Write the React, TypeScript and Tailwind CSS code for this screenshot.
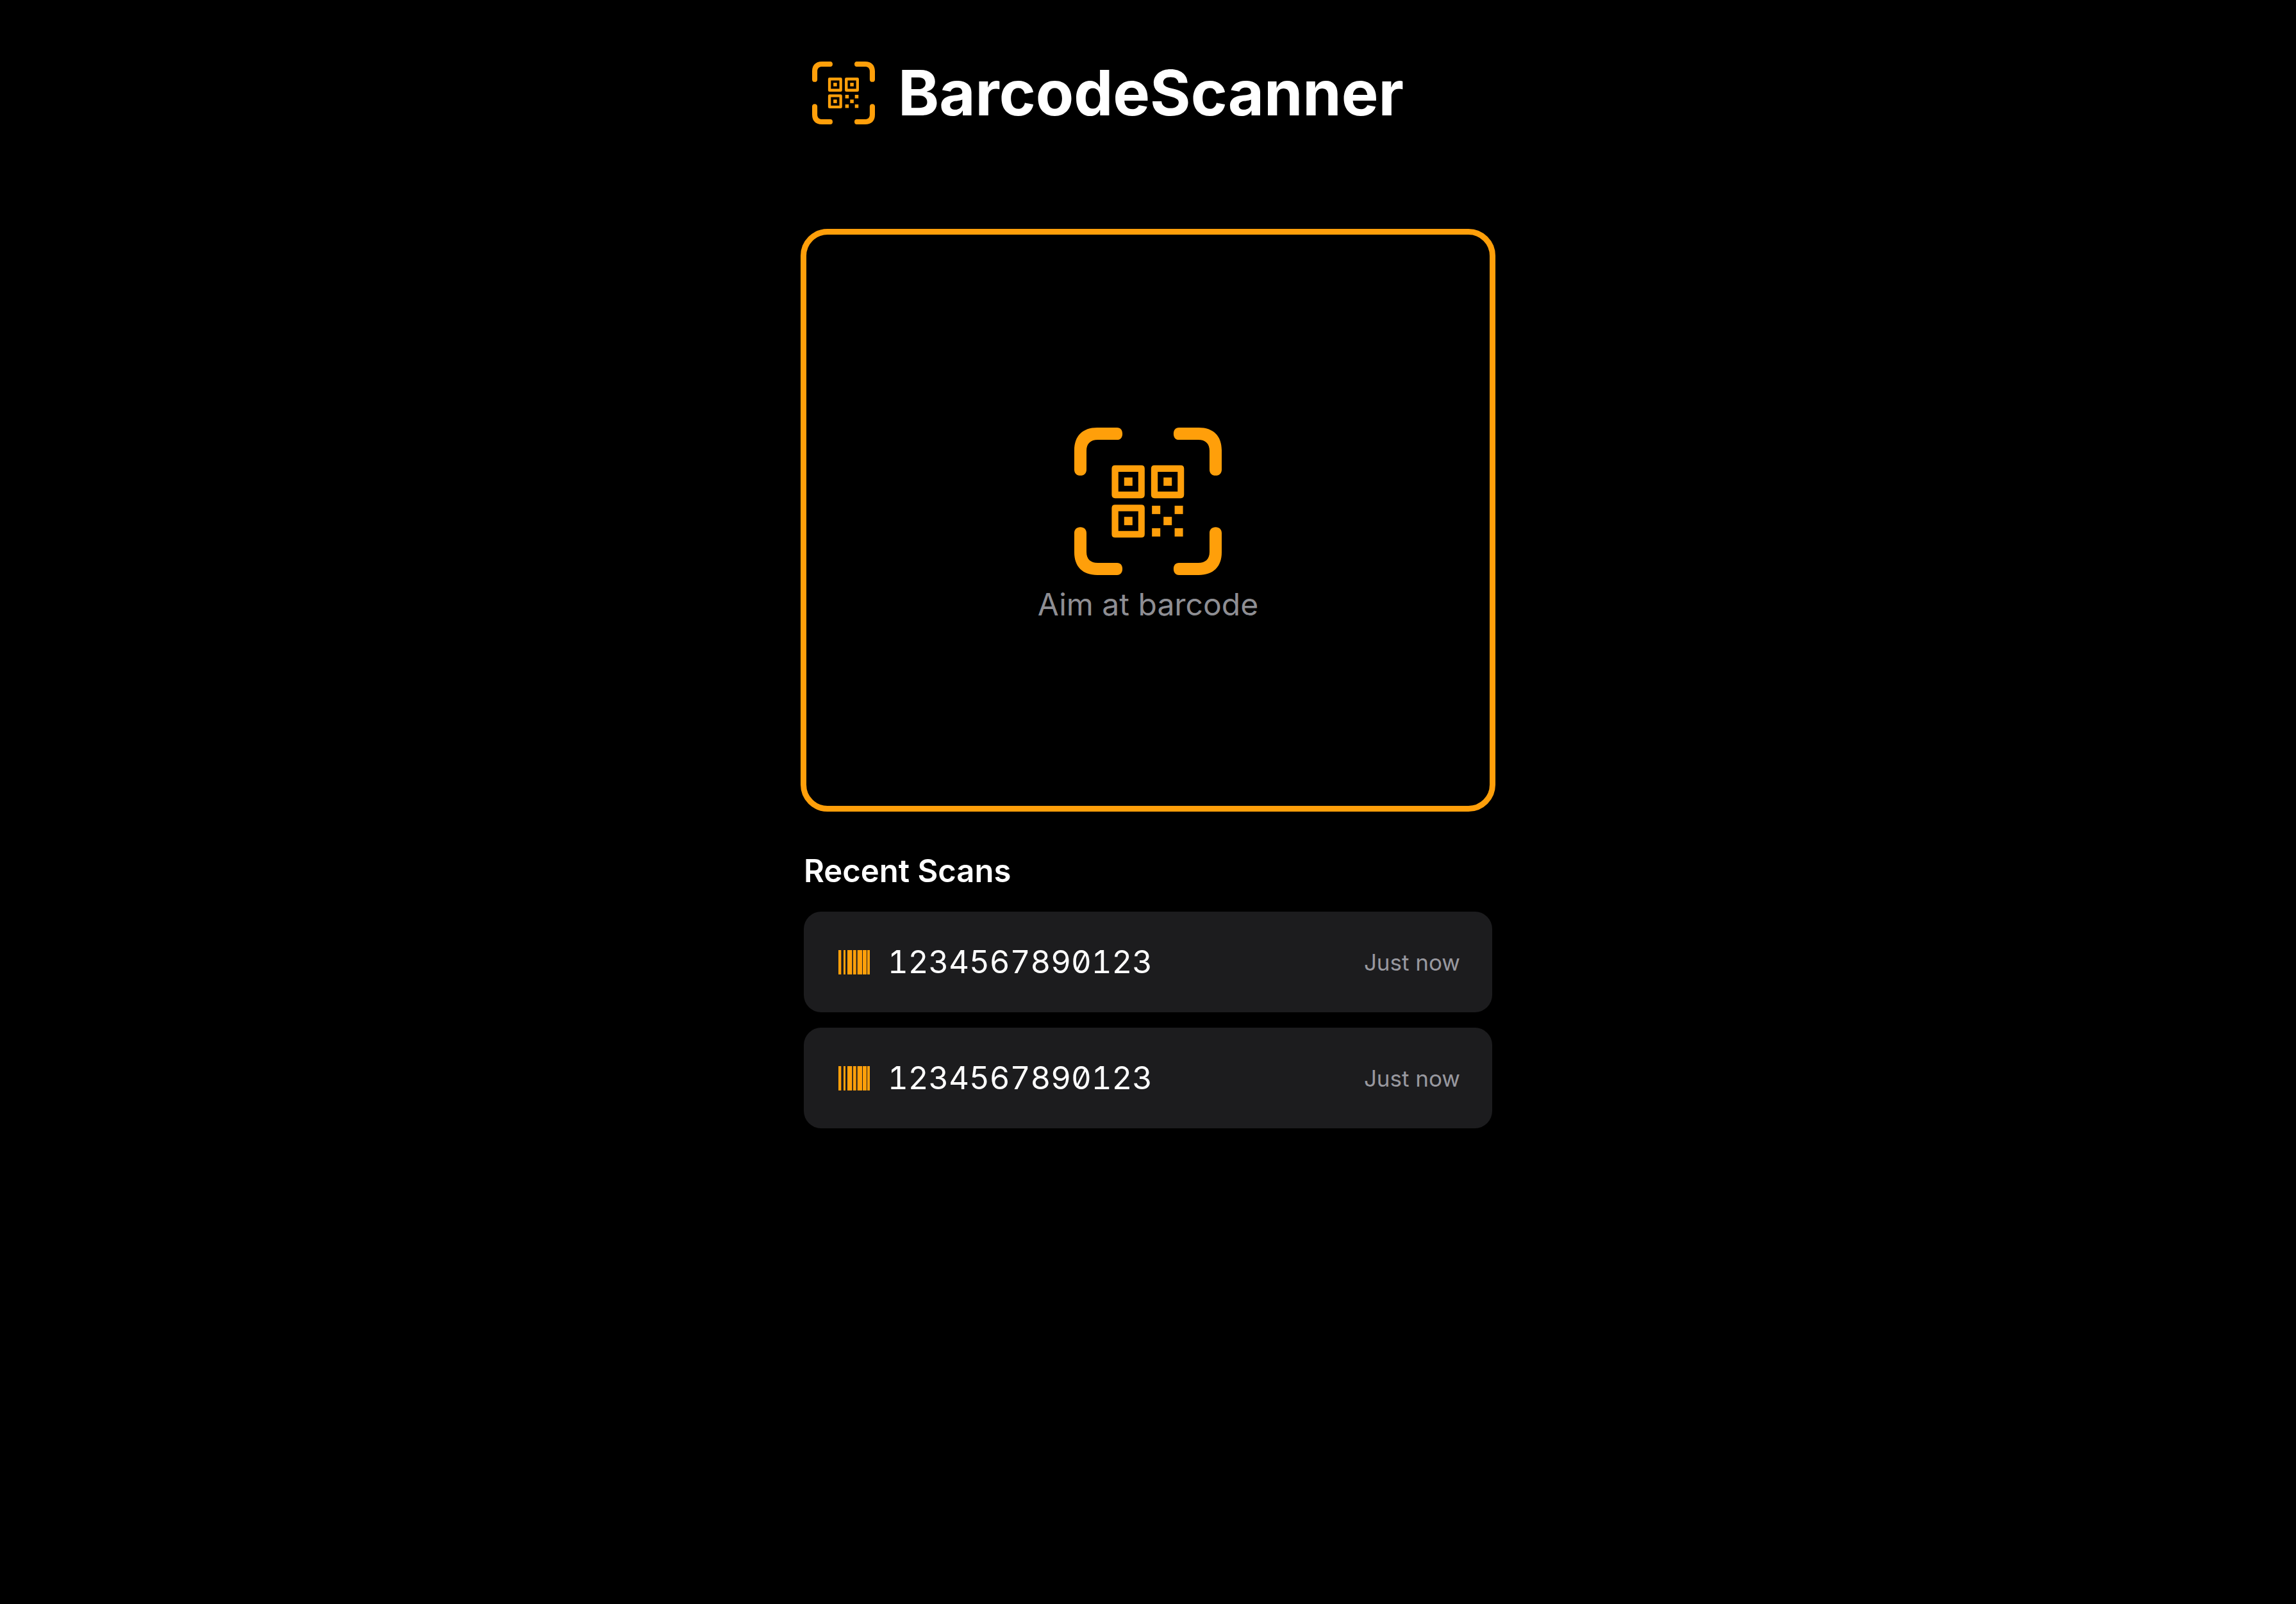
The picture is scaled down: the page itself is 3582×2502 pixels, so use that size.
const corner =
  "M48 248 V158 C48 90 88 52 155 52 H248 C264 52 273 64 273 81 C273 98 264 109 248 109 H158 C124 109 105 127 105 160 V248 C105 265 94 276 76.5 276 C59 276 48 265 48 248Z";

const finders = [
  [223, 228],
  [407, 228],
  [223, 412],
];

const dots = [
  [411, 417],
  [517, 417],
  [465, 469],
  [411, 522],
  [517, 522],
];

function ViewfinderIcon({ className }: { className: string }) {
  return (
    <svg viewBox="48 52 689 689" fill="currentColor" className={className} aria-hidden="true">
      <path d={corner} />
      <path d={corner} transform="translate(785 0) scale(-1 1)" />
      <path d={corner} transform="translate(0 793) scale(1 -1)" />
      <path d={corner} transform="translate(785 793) scale(-1 -1)" />
      {finders.map(([x, y]) => (
        <g key={`${x}-${y}`} transform={`translate(${x} ${y})`}>
          <path
            fillRule="evenodd"
            d="M16 0H138Q154 0 154 16V138Q154 154 138 154H16Q0 154 0 138V16Q0 0 16 0ZM31 31V123H124V31Z"
          />
          <rect x="58" y="57" width="39" height="39" />
        </g>
      ))}
      {dots.map(([x, y]) => (
        <rect key={`${x}-${y}`} x={x} y={y} width="39" height="39" />
      ))}
    </svg>
  );
}

const bars = [
  [0, 13],
  [24, 9],
  [42, 22],
  [69, 14],
  [89, 22],
  [114, 18],
  [135, 12],
];

function BarcodeIcon({ className }: { className: string }) {
  return (
    <svg viewBox="0 0 147 114" fill="currentColor" className={className} aria-hidden="true">
      {bars.map(([x, width]) => (
        <rect key={x} x={x} y="0" width={width} height="114" />
      ))}
    </svg>
  );
}

const scans = [
  { id: 1, code: "1234567890123", time: "Just now" },
  { id: 2, code: "1234567890123", time: "Just now" },
];

export default function App() {
  return (
    <div className="min-h-screen bg-black px-6 font-['Inter',sans-serif] text-white">
      <main className="mx-auto flex max-w-[1084px] flex-col pt-[81px]">
        <header className="flex items-center gap-9 px-[18px]">
          <ViewfinderIcon className="size-[98px] shrink-0 text-[#ff9f0a]" />
          <h1 className="text-[97px] leading-[128px] font-bold">BarcodeScanner</h1>
        </header>

        <section className="mt-[148px] flex h-[909px] flex-col items-center justify-center rounded-[42px] border-[9px] border-[#ff9f0a] pt-4">
          <ViewfinderIcon className="size-[230px] text-[#ff9f0a]" />
          <p className="mt-4 text-[48px] leading-[60px] text-[#8e8e93]">Aim at barcode</p>
        </section>

        <section className="mt-[60px] px-[5px]">
          <h2 className="text-[49px] leading-[66px] font-semibold">Recent Scans</h2>
          <ul className="mt-[30px] flex flex-col gap-6">
            {scans.map((scan) => (
              <li
                key={scan.id}
                className="flex h-[157px] items-center rounded-[27px] bg-[#1c1c1e] pr-[50px] pl-[54px]"
              >
                <BarcodeIcon className="h-[38px] w-[49px] shrink-0 text-[#ff9f0a]" />
                <span className="ml-7 text-[49px] leading-[60px] [font-feature-settings:'tnum','zero']">
                  {scan.code}
                </span>
                <time className="ml-auto text-[35px] leading-[48px] text-[#98989f]">{scan.time}</time>
              </li>
            ))}
          </ul>
        </section>
      </main>
    </div>
  );
}
